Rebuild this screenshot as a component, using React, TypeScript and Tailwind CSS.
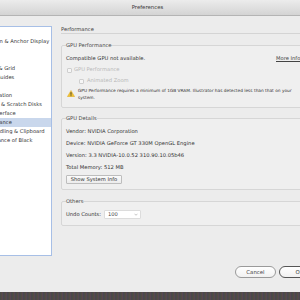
import React from "react";

const items = [
  "General",
  "Selection & Anchor Display",
  "Type",
  "Units",
  "Guides & Grid",
  "Smart Guides",
  "Slices",
  "Hyphenation",
  "Plug-ins & Scratch Disks",
  "User Interface",
  "Performance",
  "File Handling & Clipboard",
  "Appearance of Black",
];

function Checkbox() {
  return <span className="inline-block w-[5px] h-[5px] border border-[#cfcfcf] bg-[#f6f6f6] rounded-[1px] mr-[2px]" />;
}

export default function App() {
  return (
    <div className="w-[300px] h-[300px] overflow-hidden flex flex-col bg-[#ececec] text-[#333] font-['DejaVu_Sans',sans-serif] text-[5.2px]">
      <div className="h-[16px] shrink-0 flex items-center justify-center bg-gradient-to-b from-[#ececec] to-[#d4d4d4] border-b border-[#b4b4b4] text-[#3a3a3a] text-[5.4px] pr-[5px]">
        Preferences
      </div>
      <div className="flex-1 flex flex-col overflow-hidden">
        <div className="flex">
          <div className="shrink-0 pt-[10px]">
            <div className="w-[80px] -ml-[28px] h-[230px] bg-white border border-[#a7bfe6] pt-[1px] overflow-hidden">
              {items.map((t) => (
                <div
                  key={t}
                  className={
                    "h-[9px] leading-[9px] pl-[6px] whitespace-nowrap " +
                    (t === "Performance" ? "bg-[#c9d7ec]" : "")
                  }
                >
                  {t}
                </div>
              ))}
            </div>
          </div>
          <div className="ml-[9px] w-[260px] shrink-0 flex flex-col">
            <div className="pt-[10px] h-[18px] leading-[7px] border-b border-[#d4d4d4] pl-[0px] text-[#3a3a3a]">
              Performance
            </div>
            <fieldset className="mt-[8px] border border-[#d6d6d6] rounded-[2px] px-[4px] pb-[6px] bg-[#efefef]">
              <legend className="text-[#444] leading-[7px] px-[0px]">GPU Performance</legend>
              <div className="flex mt-[6px] h-[8px] items-center">
                <span className="w-[210px] shrink-0">Compatible GPU not available.</span>
                <span className="underline text-[#444]">More Info</span>
              </div>
              <div className="flex mt-[3px] h-[8px] items-center pl-[1px] text-[#b8b8b8]">
                <Checkbox />
                <span>GPU Performance</span>
              </div>
              <div className="flex mt-[3px] h-[8px] items-center pl-[13px] text-[#b8b8b8]">
                <Checkbox />
                <span className="ml-[1px]">Animated Zoom</span>
              </div>
              <div className="flex mt-[2px] items-start">
                <svg width="8" height="7" viewBox="0 0 16 14" className="mt-[3px] ml-[1px] mr-[3px] shrink-0">
                  <path d="M8 0.8 L15.4 13.4 L0.6 13.4 Z" fill="#f1c232" stroke="#d9a520" strokeWidth="0.8" />
                  <rect x="7.1" y="4.5" width="1.8" height="5" fill="#333" />
                  <rect x="7.1" y="10.6" width="1.8" height="1.7" fill="#333" />
                </svg>
                <span className="text-[4.3px] leading-[7px] w-[220px] text-[#333]">
                  GPU Performance requires a minimum of 1GB VRAM. Illustrator has detected less than that on your system.
                </span>
              </div>
            </fieldset>
            <fieldset className="mt-[7px] border border-[#d6d6d6] rounded-[2px] px-[4px] pb-[5px] bg-[#efefef]">
              <legend className="text-[#444] leading-[7px]">GPU Details</legend>
              <div className="mt-[5px] h-[8px] leading-[8px]">Vendor: NVIDIA Corporation</div>
              <div className="mt-[4px] h-[8px] leading-[8px]">Device: NVIDIA GeForce GT 330M OpenGL Engine</div>
              <div className="mt-[4px] h-[8px] leading-[8px]">Version: 3.3 NVIDIA-10.0.52 310.90.10.05b46</div>
              <div className="mt-[4px] h-[8px] leading-[8px]">Total Memory: 512 MB</div>
              <div className="mt-[4px] w-[56px] h-[9px] flex items-center justify-center bg-gradient-to-b from-[#fbfbfb] to-[#ececec] border border-[#bdbdbd] rounded-[1px]">
                Show System Info
              </div>
            </fieldset>
            <fieldset className="mt-[8px] border border-[#d6d6d6] rounded-[2px] px-[4px] pb-[6px] bg-[#efefef]">
              <legend className="text-[#444] leading-[7px]">Others</legend>
              <div className="mt-[5px] flex items-center h-[9px]">
                <span className="w-[38px]">Undo Counts:</span>
                <div className="w-[37px] h-[9px] bg-white border border-[#dcdcdc] rounded-[1px] flex items-center pl-[3px] pr-[2px]">
                  <span className="flex-1 text-[#444]">100</span>
                  <svg width="4" height="3" viewBox="0 0 8 5">
                    <path d="M1 1 L4 4 L7 1" fill="none" stroke="#a0a0a0" strokeWidth="1.2" />
                  </svg>
                </div>
              </div>
            </fieldset>
          </div>
        </div>
        <div className="flex pl-[235px] pt-[10px] gap-[3px]">
          <div className="w-[41px] h-[12px] shrink-0 rounded-full border border-[#9a9a9a] bg-gradient-to-b from-[#ffffff] to-[#f1f1f1] flex items-center justify-center text-[#444] text-[5.4px]">
            Cancel
          </div>
          <div className="w-[41px] h-[12px] shrink-0 rounded-full border-[1.5px] border-[#555] bg-gradient-to-b from-[#ffffff] to-[#f1f1f1] flex items-center justify-center text-[#444] text-[5.4px]">
            OK
          </div>
        </div>
      </div>
      <div className="h-[8px] shrink-0 bg-[#4a4247] bg-[repeating-linear-gradient(90deg,#5a4a55_0px,#3e4a3c_1px,#6a4f4a_2px,#44405a_3px,#505040_4px)]" />
    </div>
  );
}
